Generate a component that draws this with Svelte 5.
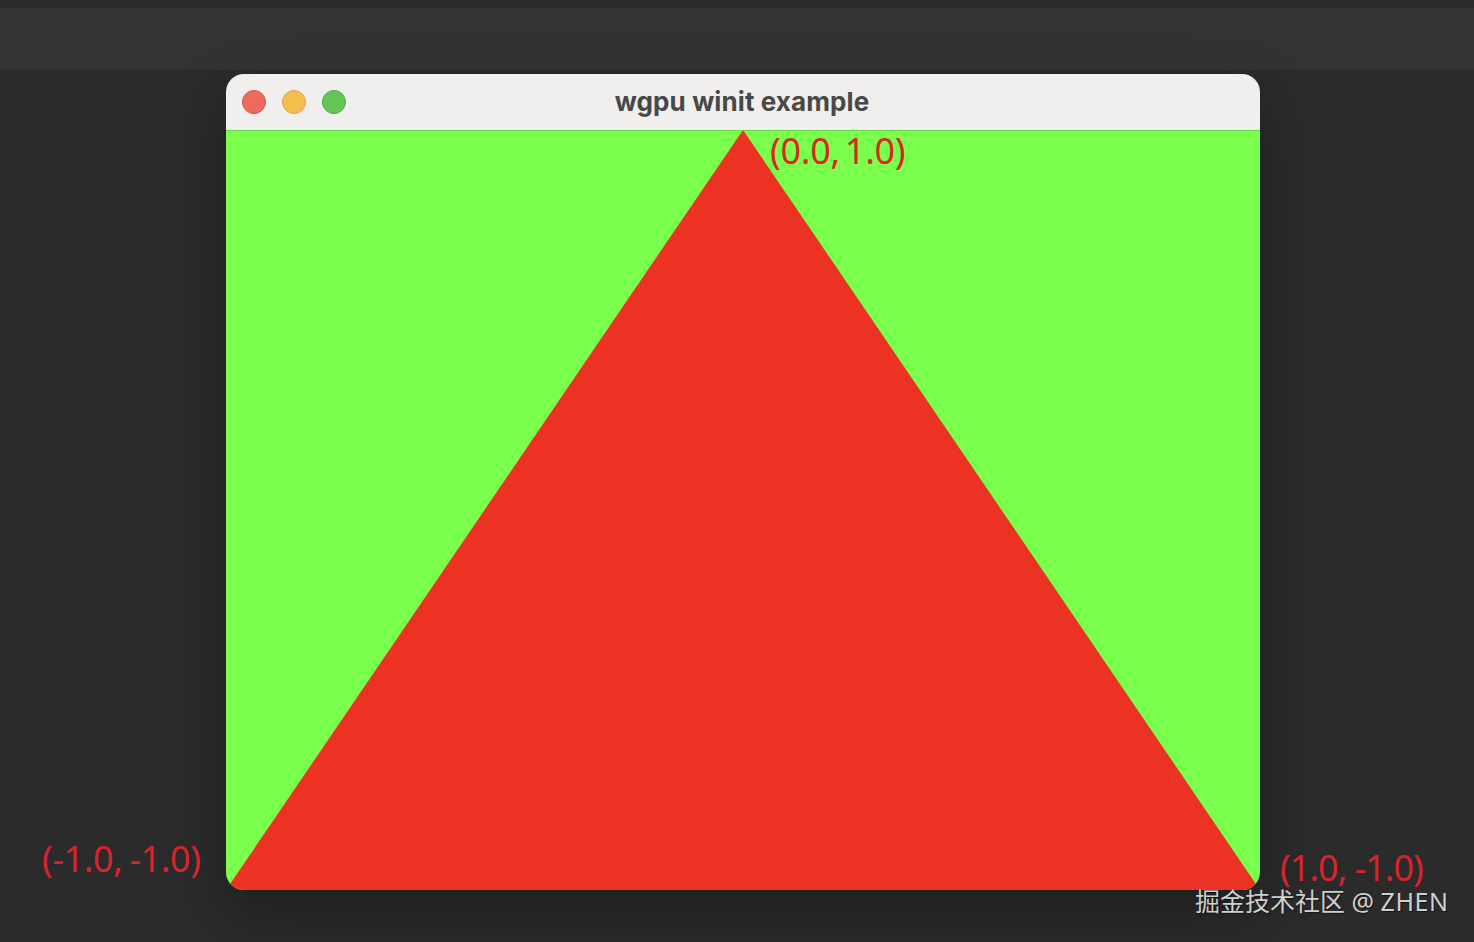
<script>
    const labels = [
        { text: '(0.0, 1.0)', cls: 'top' },
        { text: '(-1.0, -1.0)', cls: 'left' },
        { text: '(1.0, -1.0)', cls: 'right' }
    ];
</script>

<div class="screen">
    <div class="top-strip"></div>
    <div class="band"></div>

    <div class="window">
        <div class="titlebar">
            <div class="lights">
                <span class="light red"></span>
                <span class="light yellow"></span>
                <span class="light green"></span>
            </div>
            <span class="title">wgpu winit example</span>
        </div>
        <svg class="canvas" viewBox="0 0 1034 759" preserveAspectRatio="none">
            <rect width="1034" height="759" fill="#79ff4c" />
            <polygon points="517,-1 1034,759 0,759" fill="#ec3323" />
        </svg>
    </div>

    {#each labels as label}
        <span class="label {label.cls}">{label.text}</span>
    {/each}

    <span class="watermark">掘金技术社区 @ <span class="name">ZHEN</span></span>
</div>

<style>
    :global(body) {
        margin: 0;
        background: #2b2b2b;
    }

    .screen {
        position: relative;
        height: 942px;
        overflow: hidden;
        background: #2b2b2b;
        font-family: "Noto Sans", "Noto Sans CJK SC", sans-serif;
    }

    .top-strip {
        height: 8px;
        background: #2c2c2c;
    }

    .band {
        height: 62px;
        background: #333333;
    }

    .window {
        width: 1034px;
        margin: 4px 0 0 226px;
        border-radius: 18px;
        overflow: hidden;
        box-shadow: 0 24px 60px rgba(0, 0, 0, 0.3);
    }

    .titlebar {
        position: relative;
        height: 56px;
        display: flex;
        align-items: center;
        justify-content: center;
        background: #f0efed;
        border-bottom: 1px solid #63d843;
    }

    .lights {
        position: absolute;
        left: 16px;
        top: 16px;
        display: flex;
        gap: 16px;
    }

    .light {
        width: 24px;
        height: 24px;
        border-radius: 50%;
        box-sizing: border-box;
    }

    .red {
        background: #ee6a5f;
        border: 1px solid #d9534a;
    }

    .yellow {
        background: #f5bf4f;
        border: 1px solid #dfa53c;
    }

    .green {
        background: #62c554;
        border: 1px solid #52ab45;
    }

    .title {
        font-family: Inter, sans-serif;
        font-size: 26px;
        font-weight: 700;
        letter-spacing: 0.1px;
        color: #484848;
        margin: -2px 2px 0 0;
    }

    .canvas {
        display: block;
        width: 1034px;
        height: 759px;
    }

    .label {
        position: absolute;
        font-size: 36px;
        line-height: 36px;
        white-space: nowrap;
    }

    .top {
        left: 770px;
        top: 133px;
        color: #d8281f;
        letter-spacing: -0.3px;
        word-spacing: -4px;
    }

    .left {
        left: 42px;
        top: 841px;
        color: #d7232c;
        letter-spacing: -0.4px;
        word-spacing: -2px;
    }

    .right {
        left: 1280px;
        top: 850px;
        color: #d7232c;
        letter-spacing: -1px;
    }

    .watermark {
        position: absolute;
        left: 1195px;
        top: 888px;
        font-size: 25px;
        line-height: 26px;
        color: #cfcfcf;
        text-shadow: 1px 1px 1px rgba(0, 0, 0, 0.5);
        white-space: nowrap;
    }

    .name {
        letter-spacing: 0.6px;
    }
</style>
